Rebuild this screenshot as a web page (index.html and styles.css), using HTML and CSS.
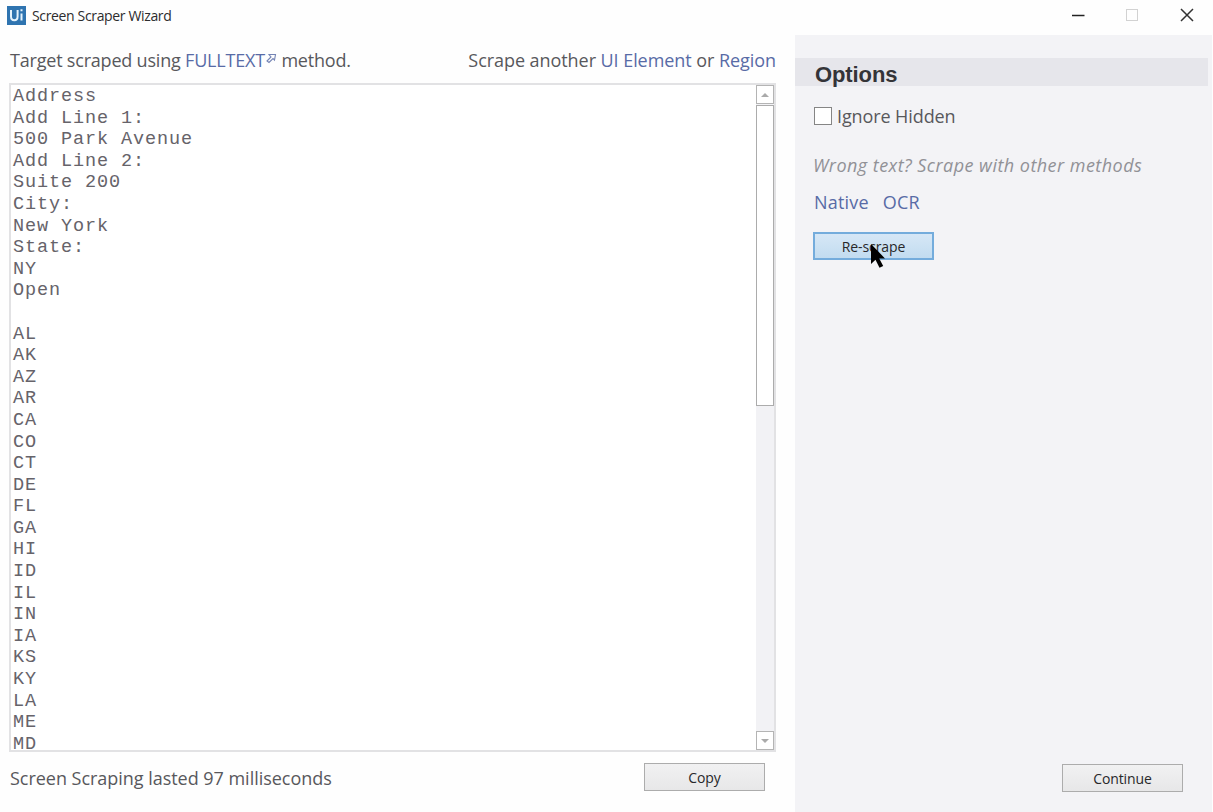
FILE: index.html
```
<!DOCTYPE html>
<html lang="en">
<head>
<meta charset="utf-8">
<title>Screen Scraper Wizard</title>
<link rel="stylesheet" href="styles.css">
</head>
<body>
<div class="window">
  <header class="titlebar">
    <svg class="logo" width="19" height="19" viewBox="0 0 19 19"><rect width="19" height="19" fill="#2f74b0"/><path d="M4 4v6.500q0 3.700 3.300 3.700t3.300-3.700V4M14.500 7.500v7M14.500 3.300v2" fill="none" stroke="#e4f2fc" stroke-width="2"/></svg>
    <h1 class="title">Screen Scraper Wizard</h1>
    <div class="controls">
      <svg width="14" height="14" viewBox="0 0 14 14"><path d="M1 7.500h12.500" stroke="#222" stroke-width="1.500"/></svg>
      <svg width="14" height="14" viewBox="0 0 14 14"><rect x="1.500" y="1.500" width="11" height="11" fill="none" stroke="#d2d2d2"/></svg>
      <svg class="close" width="14" height="14" viewBox="0 0 14 14"><path d="M1 1l12 12M13 1L1 13" stroke="#333" stroke-width="1.500"/></svg>
    </div>
  </header>
  <div class="body">
    <main class="main">
      <div class="info">
        <div class="method">Target scraped using <a>FULLTEXT<svg class="ext" width="11" height="11" viewBox="0 0 11 11"><path d="M3 1.500h6.500L8.500 7 7 5.500 3 9.500l-2-1.500 4-4z" fill="none" stroke="#7484b4" stroke-width="1.100"/></svg></a> method.</div>
        <div class="another">Scrape another <a>UI Element</a> or <a>Region</a></div>
      </div>
      <div class="output">
<pre class="text">Address
Add Line 1:
500 Park Avenue
Add Line 2:
Suite 200
City:
New York
State:
NY
Open

AL
AK
AZ
AR
CA
CO
CT
DE
FL
GA
HI
ID
IL
IN
IA
KS
KY
LA
ME
MD</pre>
        <div class="scrollbar">
          <div class="arrow"><svg width="8" height="4" viewBox="0 0 8 4"><path d="M0 4L4 0l4 4z" fill="#aaa"/></svg></div>
          <div class="track"><div class="thumb"></div></div>
          <div class="arrow"><svg width="8" height="4" viewBox="0 0 8 4"><path d="M0 0l4 4 4-4z" fill="#aaa"/></svg></div>
        </div>
      </div>
      <div class="footer">
        <div class="status">Screen Scraping lasted 97 milliseconds</div>
        <button class="btn">Copy</button>
      </div>
    </main>
    <aside class="side">
      <h2 class="heading">Options</h2>
      <label class="check"><span class="box"></span><span>Ignore Hidden</span></label>
      <p class="hint">Wrong text? Scrape with other methods</p>
      <div class="links"><a>Native</a><a>OCR</a></div>
      <div class="rescrape">
        <button class="btn primary">Re-scrape</button>
        <svg class="cursor" width="14" height="24" viewBox="0 0 14 24"><path d="M0 0v20l4.500-4.300 4 8 3.700-1.700-4-7.600H14z" fill="#000"/></svg>
      </div>
      <button class="btn continue">Continue</button>
    </aside>
  </div>
</div>
</body>
</html>
```
FILE: styles.css
```
* { box-sizing: border-box; }
body {
  margin: 0;
  background: #fefefe;
  font-family: "Open Sans", "Noto Sans", sans-serif;
  font-size: 18px;
  letter-spacing: -0.03px;
  color: #58585c;
}
a { color: #586ba6; }
.window { display: flex; flex-direction: column; width: 1213px; height: 812px; overflow: hidden; }
.titlebar { display: flex; align-items: center; height: 34px; flex: none; padding: 0 19px 4px 7px; }
.logo { margin-right: 6px; }
.title { margin: 1px 0 0; font-size: 14px; font-weight: 400; letter-spacing: -0.35px; color: #2c2c2e; }
.controls { display: flex; gap: 40px; margin-left: auto; }
.close { margin-left: 1px; }
.body { display: flex; flex: 1; min-height: 0; }
.main { display: flex; flex-direction: column; width: 795px; padding: 0 18px 0 9px; }
.info { display: flex; justify-content: space-between; height: 49px; padding: 13px 1px 0; line-height: 26px; white-space: nowrap; }
.method { letter-spacing: -0.2px; }
.another { letter-spacing: -0.06px; }
.ext { vertical-align: 3px; margin-left: 1px; }
.output { display: flex; justify-content: space-between; width: 767px; height: 669px; border: 2px solid #e2e2e4; overflow: hidden; background: #fff; }
.text { height: 664px; margin: 1px 0 0 2px; font: 18.5px/21.6px "Liberation Mono", monospace; letter-spacing: 0.9px; color: #66636a; }
.scrollbar { display: flex; flex-direction: column; width: 18px; height: 665px; background: #f2f2f5; }
.arrow { display: flex; align-items: center; justify-content: center; width: 18px; height: 19px; border: 1px solid #b4b4b4; background: #fff; flex: none; }
.track { flex: 1; padding-top: 1px; }
.thumb { width: 18px; height: 301px; border: 1px solid #acacac; background: #fff; }
.footer { display: flex; justify-content: space-between; padding: 11px 12px 0 1px; }
.status { line-height: 30px; white-space: nowrap; }
.btn { width: 121px; height: 28px; padding: 0; border: 1px solid #acacac; background: linear-gradient(#f1f1f2, #e7e7e8); font-family: inherit; font-size: 14px; letter-spacing: -0.1px; color: #28282a; }
.side { display: flex; flex-direction: column; width: 417px; background: #f3f3f6; margin-top: 1px; }
.heading { width: 413px; height: 28px; margin: 23px 0 0; padding: 3px 0 0 20px; background: #e6e6eb; font: bold 22px/28px "Liberation Sans", sans-serif; letter-spacing: -0.1px; color: #343438; }
.check { display: flex; align-items: center; height: 26px; margin: 17px 0 0 19px; gap: 5px; letter-spacing: -0.1px; }
.box { width: 18px; height: 18px; border: 1px solid #858585; background: #fff; }
.hint { margin: 23px 0 0 18px; line-height: 26px; font-style: italic; letter-spacing: 0.46px; color: #919196; white-space: nowrap; }
.links { display: flex; gap: 14px; margin: 11px 0 0 19px; line-height: 26px; letter-spacing: 0.2px; }
.rescrape { position: relative; height: 28px; margin: 17px 0 0 18px; }
.primary { display: block; border: 2px solid #74acdc; background: linear-gradient(#d6e7f6, #c2dcf0); }
.cursor { position: absolute; left: 58px; top: 12px; }
.continue { margin: auto 29px 20px auto; }
```
